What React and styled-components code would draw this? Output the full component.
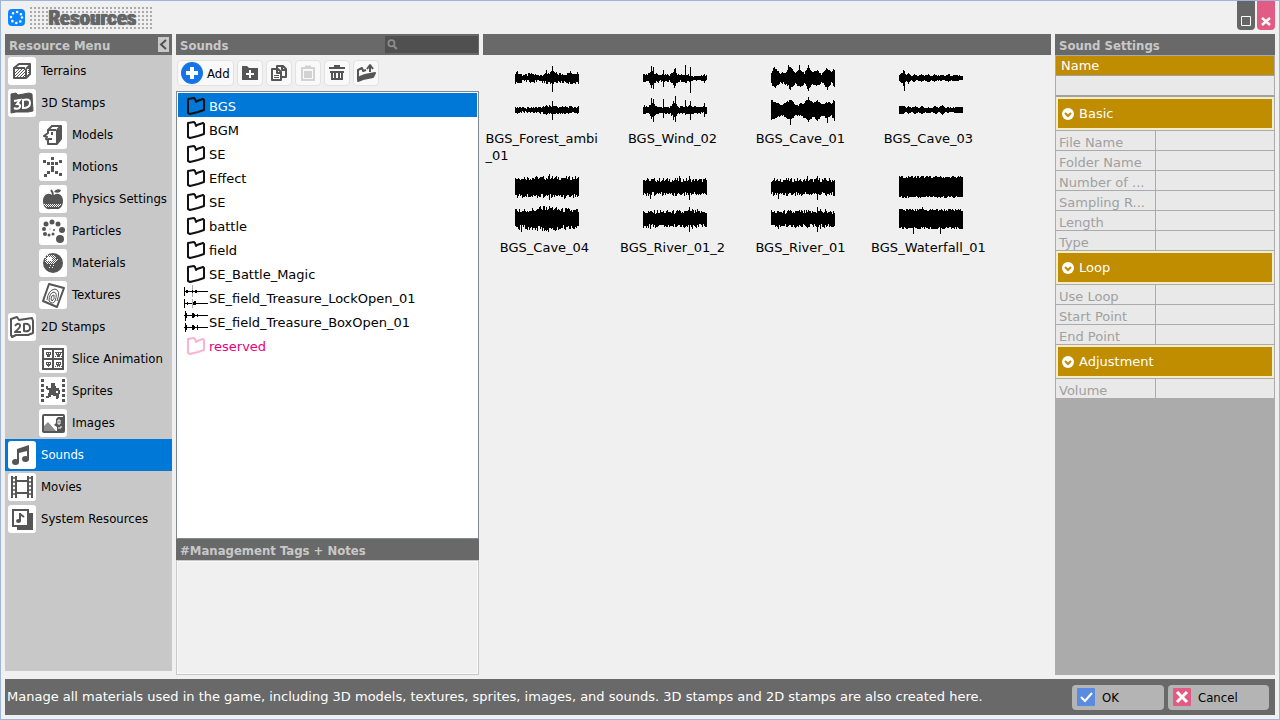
import React, { useState } from 'react';
import styled, { createGlobalStyle, css } from 'styled-components';

const wide = '"DejaVu Sans", Verdana, sans-serif';
const narrow = '"DejaVu Sans Condensed", Tahoma, sans-serif';
const ink = '#555555';

const GlobalStyle = createGlobalStyle`
  * {
    box-sizing: border-box;
  }
  body {
    margin: 0;
    background: #f0f0f0;
  }
  button, input, textarea {
    margin: 0;
    padding: 0;
    border: 0;
    border-radius: 0;
    font: inherit;
    color: inherit;
    background: none;
  }
`;

// Icons, all on a 28px grid

const TerrainIcon = () => (
  <g fill="none" stroke={ink} strokeWidth="2" strokeLinejoin="round">
    <path d="M6 11 L11 7 H22 V17 L18 21 H6 Z M6 11 H17 M18 12 L22 8 M18 12 V21" />
    <path d="M7 16 L11 12 M7 19 L14 12 M9 20 L17 12 M12 20 L17 15 M15 20 L17 18" strokeWidth="1" />
    <path d="M20.5 11 V18" strokeWidth="1" strokeDasharray="1 1" />
  </g>
);

const Stamp3DIcon = () => (
  <g>
    <path d="M3 5 L8 4 L10 6 L21 4 L24 5 L25 22 L20 23 L8 23 L3 24 Z" fill={ink} stroke={ink} strokeLinejoin="round" />
    <path d="M6 12 L12 11 L9 15 Q13 15 12 18 Q10 21 6 19" fill="none" stroke="#fff" strokeWidth="2" />
    <path d="M15 11 V19 Q22 19 22 14 Q22 9 15 11 Z" fill="none" stroke="#fff" strokeWidth="2" />
  </g>
);

const ModelIcon = () => (
  <g fill="none" stroke={ink} strokeWidth="2" strokeLinejoin="round">
    <path d="M9 9 L13 5 H22 V18 L18 23 H9 V19 L7 18 L8 16 L5 15 L9 12 Z" />
    <path d="M9 9 H17 M18 9 L22 5 M18 9 V23 M9 18 H13 M13 11 V14" />
    <path d="M20 8 V20" />
  </g>
);

const motionDots = [[12, 4], [4, 7], [20, 7], [8, 9], [12, 9], [16, 9], [12, 13], [12, 16], [8, 18], [16, 18], [5, 21], [20, 20]];

const MotionIcon = () => (
  <g fill={ink} shapeRendering="crispEdges">
    {motionDots.map(([x, y]) => (
      <rect key={`${x}-${y}`} x={x} y={y} width="3" height="3" />
    ))}
  </g>
);

const AppleIcon = () => (
  <g fill={ink}>
    <path d="M13 10 C9 7 4 10 4 16 C4 22 8 25 11 24 H17 C21 25 24 21 24 16 C24 10 19 7 15 10 Z" />
    <path d="M15 7 Q17 3 22 5 Q21 9 15 7 Z" />
    <path d="M14 11 Q14 7 12 5" fill="none" stroke={ink} strokeWidth="2" />
    <path d="M5 19.5 H23 M7 21.5 H21" stroke="#fff" strokeDasharray="1 1" />
    <path d="M6 20.5 H22" stroke="#fff" strokeDasharray="1 1" />
  </g>
);

const ParticleIcon = () => (
  <g fill={ink}>
    <circle cx="21" cy="22" r="4" />
    <circle cx="23" cy="13" r="3" />
    <circle cx="19" cy="7" r="2.5" />
    <circle cx="13" cy="5" r="2.5" />
    <circle cx="7" cy="7" r="2.5" />
    <circle cx="5" cy="12" r="2" />
    <circle cx="6" cy="17" r="2" />
    <circle cx="10" cy="18" r="1.5" />
    <circle cx="14" cy="17" r="1.5" />
    <circle cx="15" cy="13" r="1" />
    <circle cx="11" cy="12" r="0.5" />
  </g>
);

const MaterialIcon = () => (
  <g>
    <circle cx="14" cy="14" r="10" fill={ink} />
    <path d="M9 8 H13 V12 H8 V9 Z" fill="#fff" />
    <g fill="none" stroke="#fff" strokeDasharray="1 1">
      <path d="M8 6.5 H16 M6 8.5 H18 M6 10.5 H18 M6 12.5 H18 M8 14.5 H16" />
      <path d="M9 7.5 H17 M7 9.5 H17 M7 11.5 H19 M7 13.5 H17" />
      <path d="M11 16.5 H17 M18 10.5 H21 M10 18.5 H16" strokeDasharray="1 2" />
    </g>
  </g>
);

const TextureIcon = () => (
  <g fill="none" stroke={ink}>
    <path d="M10 3 L25 7 L18 26 L4 20 Z" strokeWidth="2" strokeLinejoin="round" />
    <path d="M8 19 Q9 9 16 8 Q22 9 18 20 M10 20 Q10 12 15 11 Q19 12 16 20 Q14 24 10 20 M12 18 Q12 14 15 14 Q16 18 13 20 Z" />
  </g>
);

const Stamp2DIcon = () => (
  <g fill="none" stroke={ink} strokeWidth="2" strokeLinejoin="round">
    <path d="M3 6 L9 4 L11 7 L24 5 L25 8 V20 L20 22 L8 22 L4 24 L3 22 Z" />
    <path d="M7 13 Q10 9 12 12 Q13 14 7 19 H13" />
    <path d="M16 11 V18 Q22 19 22 15 Q22 10 16 11 Z" />
  </g>
);

const SliceIcon = () => (
  <g shapeRendering="crispEdges">
    <path d="M4 4 H24 V24 H4 Z M14 4 V24 M4 14 H24" fill="none" stroke={ink} strokeWidth="2" />
    <path d="M7 7h5v3h-1v2H8v-2H7zM17 7h5v3h-1v2h-3v-2h-1zM7 17h5v3h-1v1h-1v1H9v-1H8v-1H7zM17 17h5v3h-1v2h-3v-2h-1z" fill={ink} />
    <path d="M16 7h1v1h-1zM22 7h1v1h-1zM16 11h1v1h-1zM22 11h1v1h-1zM16 21h1v1h-1zM22 21h1v1h-1z" fill={ink} />
    <path d="M8 8h1v1H8zM10 8h1v1h-1zM18 8h1v1h-1zM20 8h1v1h-1zM8 18h1v1H8zM10 18h1v1h-1zM18 18h1v1h-1zM20 18h1v1h-1zM19 21h1v1h-1z" fill="#fff" />
  </g>
);

const SpriteIcon = () => (
  <g fill={ink} shapeRendering="crispEdges">
    {[2, 7, 12, 17, 22].map((y) => (
      <React.Fragment key={y}>
        <rect x="2" y={y} width="3" height="3" />
        <rect x="23" y={y} width="3" height="3" />
      </React.Fragment>
    ))}
    <path d="M12 6h4v3h1v2h3v2h1v4h-2v-3h-2v2h3v5h-1v1h-2v-3h-3v-1h-2v2h-2v1H7v-2h2v-3h1v-3H8v-1H7V9h2v2h3z" />
  </g>
);

const ImageIcon = () => (
  <g>
    <rect x="4" y="6" width="21" height="17" rx="1" fill="none" stroke={ink} strokeWidth="2" />
    <path d="M5 17 L9 13 L17 22 H5 Z" fill="#8c8c8c" />
    <path d="M24 8 H19 L17 10 V14 L15 16 L18 18 V22 H24 Z" fill={ink} />
    <path d="M19 11 H21 V15 H19 Z M22 17 V19 H19" fill="none" stroke="#fff" />
  </g>
);

const NoteIcon = () => (
  <g fill={ink}>
    <ellipse cx="7.5" cy="21" rx="3.5" ry="3" />
    <ellipse cx="17.5" cy="18" rx="3.5" ry="3" />
    <path d="M9 8 L21 4 V19 H19 V10 L11 12 V22 H9 Z" />
  </g>
);

const MovieIcon = () => (
  <g fill="none" stroke={ink}>
    <path d="M4 3 V25 M8 3 V25 M20 3 V25 M24 3 V25" strokeWidth="2" />
    <path d="M8 8 H20 M8 20 H20" strokeWidth="2" />
    <path d="M4 5 H8 M4 9 H8 M4 13 H8 M4 17 H8 M4 21 H8 M20 5 H24 M20 9 H24 M20 13 H24 M20 17 H24 M20 21 H24" strokeWidth="1.5" />
  </g>
);

const SystemIcon = () => (
  <g>
    <path d="M20 8 H25 V25 H9 V21 H20 Z" fill={ink} />
    <rect x="5" y="5" width="15" height="16" fill="#fff" stroke={ink} strokeWidth="2" />
    <path d="M12 8 V16 M12 9 L16 12" fill="none" stroke={ink} strokeWidth="2" />
    <ellipse cx="10.5" cy="16" rx="2.5" ry="2" fill={ink} />
  </g>
);

const menu = [
  { name: 'Terrains', icon: TerrainIcon },
  { name: '3D Stamps', icon: Stamp3DIcon },
  { name: 'Models', icon: ModelIcon, nested: true },
  { name: 'Motions', icon: MotionIcon, nested: true },
  { name: 'Physics Settings', icon: AppleIcon, nested: true },
  { name: 'Particles', icon: ParticleIcon, nested: true },
  { name: 'Materials', icon: MaterialIcon, nested: true },
  { name: 'Textures', icon: TextureIcon, nested: true },
  { name: '2D Stamps', icon: Stamp2DIcon },
  { name: 'Slice Animation', icon: SliceIcon, nested: true },
  { name: 'Sprites', icon: SpriteIcon, nested: true },
  { name: 'Images', icon: ImageIcon, nested: true },
  { name: 'Sounds', icon: NoteIcon },
  { name: 'Movies', icon: MovieIcon },
  { name: 'System Resources', icon: SystemIcon },
];

const files = [
  { name: 'BGS' },
  { name: 'BGM' },
  { name: 'SE' },
  { name: 'Effect' },
  { name: 'SE' },
  { name: 'battle' },
  { name: 'field' },
  { name: 'SE_Battle_Magic' },
  { name: 'SE_field_Treasure_LockOpen_01', sound: 'lock' },
  { name: 'SE_field_Treasure_BoxOpen_01', sound: 'box' },
  { name: 'reserved', reserved: true },
];

// Each channel: env = [x, amplitude] points, jitter, peaks = [x, up, down]
const clips = [
  {
    name: 'BGS_Forest_ambi_01',
    channels: [
      { env: [[0, 5], [4, 4], [10, 3], [16, 4], [22, 3], [30, 4], [36, 6], [42, 4], [50, 4], [55, 5], [63, 5]], jitter: 3, peaks: [[31, 8, 6], [37, 12, 14], [38, 7, 6], [55, 7, 6], [2, 7, 5]] },
      { env: [[0, 3], [10, 2], [30, 3], [37, 4], [45, 3], [54, 3], [63, 3]], jitter: 2, peaks: [[31, 5, 5], [37, 9, 10], [34, 5, 4]] },
    ],
  },
  {
    name: 'BGS_Wind_02',
    channels: [
      { env: [[0, 4], [4, 3], [8, 8], [12, 4], [20, 3], [26, 3], [31, 7], [35, 3], [43, 4], [50, 2], [63, 3]], jitter: 2, peaks: [[8, 12, 10], [10, 11, 11], [20, 8, 9], [31, 9, 10], [32, 10, 8], [42, 13, 5], [47, 11, 15], [61, 4, 5]] },
      { env: [[0, 4], [5, 3], [9, 8], [13, 3], [26, 3], [31, 7], [35, 3], [42, 4], [63, 3]], jitter: 2, peaks: [[8, 12, 9], [10, 11, 12], [20, 11, 8], [30, 9, 10], [32, 14, 12], [42, 10, 5], [47, 9, 10], [61, 7, 7]] },
    ],
  },
  {
    name: 'BGS_Cave_01',
    channels: [
      { env: [[0, 6], [3, 10], [8, 5], [13, 5], [19, 11], [24, 5], [28, 10], [33, 5], [37, 12], [41, 6], [46, 8], [50, 4], [56, 10], [60, 5], [63, 9]], jitter: 2, peaks: [[17, 13, 7], [28, 13, 8], [37, 13, 13], [56, 9, 12]] },
      { env: [[0, 10], [5, 7], [11, 5], [19, 10], [25, 5], [31, 6], [37, 11], [42, 7], [46, 10], [51, 5], [56, 9], [60, 6], [63, 10]], jitter: 2, peaks: [[19, 10, 15], [37, 13, 12], [56, 7, 13]] },
    ],
  },
  {
    name: 'BGS_Cave_03',
    channels: [
      { env: [[0, 3], [4, 6], [7, 3], [9, 5], [12, 2], [15, 4], [18, 2], [22, 4], [25, 2], [29, 4], [32, 2], [35, 4], [38, 2], [42, 3], [45, 2], [49, 4], [52, 2], [56, 3], [63, 2]], jitter: 1, peaks: [[4, 8, 8], [5, 7, 13], [9, 5, 6]] },
      { env: [[0, 4], [4, 4], [7, 2], [9, 4], [12, 2], [16, 4], [19, 2], [22, 4], [26, 2], [29, 3], [32, 2], [36, 4], [39, 2], [43, 5], [46, 2], [49, 3], [52, 2], [56, 3], [63, 3]], jitter: 1, peaks: [] },
    ],
  },
  {
    name: 'BGS_Cave_04',
    channels: [
      { env: [[0, 9], [30, 9], [63, 9]], jitter: 4, peaks: [[20, 10, 9], [34, 13, 13], [49, 9, 12], [7, 8, 11]] },
      { env: [[0, 9], [9, 8], [27, 10], [36, 11], [45, 9], [63, 8]], jitter: 5, peaks: [[4, 10, 11], [25, 13, 10], [29, 13, 12], [6, 7, 13], [33, 10, 13]] },
    ],
  },
  {
    name: 'BGS_River_01_2',
    channels: [
      { env: [[0, 7], [63, 7]], jitter: 4, peaks: [[7, 6, 12], [36, 11, 7], [46, 11, 13], [30, 6, 9]] },
      { env: [[0, 7], [46, 7], [63, 7]], jitter: 4, peaks: [[7, 8, 10], [30, 9, 8], [46, 12, 13], [49, 10, 10], [54, 10, 6]] },
    ],
  },
  {
    name: 'BGS_River_01',
    channels: [
      { env: [[0, 7], [63, 7]], jitter: 4, peaks: [[7, 6, 12], [36, 11, 7], [46, 11, 13], [30, 6, 9]] },
      { env: [[0, 7], [46, 7], [63, 7]], jitter: 4, peaks: [[7, 8, 10], [30, 9, 8], [46, 12, 13], [49, 10, 10], [54, 10, 6]] },
    ],
  },
  {
    name: 'BGS_Waterfall_01',
    channels: [
      { env: [[0, 10], [63, 10]], jitter: 2, peaks: [[6, 9, 11], [30, 11, 9]] },
      { env: [[0, 9], [63, 9]], jitter: 3, peaks: [[14, 9, 15], [23, 12, 9], [33, 10, 10], [41, 9, 15]] },
    ],
  },
];

const sections = [
  { title: 'Basic', fields: ['File Name', 'Folder Name', 'Number of ...', 'Sampling R...', 'Length', 'Type'] },
  { title: 'Loop', fields: ['Use Loop', 'Start Point', 'End Point'] },
  { title: 'Adjustment', fields: ['Volume'] },
];

const noise = (n) => {
  const v = Math.sin(n * 12.9898) * 43758.5453;
  return v - Math.floor(v);
};

const amplitude = (env, x) => {
  for (let i = 1; i < env.length; i++) {
    const [x0, a0] = env[i - 1];
    const [x1, a1] = env[i];
    if (x <= x1) return a0 + ((a1 - a0) * (x - x0)) / (x1 - x0);
  }
  return env[env.length - 1][1];
};

const channelPath = ({ env, jitter, peaks }, mid, seed) => {
  let d = '';
  for (let x = 0; x < 64; x++) {
    const peak = peaks.find((p) => p[0] === x);
    const base = amplitude(env, x);
    const up = peak ? peak[1] : Math.round(base + jitter * (noise(x + seed) - 0.5));
    const down = peak ? peak[2] : Math.round(base + jitter * (noise(x + seed + 90) - 0.5));
    d += `M${x} ${mid - up}h1v${up + down}h-1z`;
  }
  return d;
};

const Waveform = ({ channels, seed }) => (
  <svg width="64" height="64" viewBox="0 0 64 64" shapeRendering="crispEdges" aria-hidden="true">
    <path d={channelPath(channels[0], 16, seed)} />
    <path d={channelPath(channels[1], 48, seed + 200)} />
  </svg>
);

const FolderIcon = ({ color }) => (
  <svg width="24" height="24" viewBox="0 0 24 24" fill="none" stroke={color} strokeWidth="2" strokeLinejoin="round" aria-hidden="true">
    <path d="M4 6 L10 5 L11 6 L12 9 L13 8 L19 6 L20 7 V17 L14 19 L6 21 L4 20 Z" />
  </svg>
);

const ClipIcon = ({ kind }) => (
  <svg width="24" height="24" viewBox="0 0 24 24" shapeRendering="crispEdges" aria-hidden="true">
    <path d="M0 6h24v1H0zM0 18h24v1H0z" />
    {kind === 'lock' ? (
      <>
        <path d="M8 0h1v12H8zM8 14h1v9H8z" fill="#aaa" />
        <path d="M0 2h1v9H0zM0 14h1v9H0zM2 5h2v3H2zM3 17h1v3H3zM8 5h1v3H8zM11 5h2v3h-2zM10 16h2v4h-2zM9 17h1v3H9z" />
      </>
    ) : (
      <path d="M1 2h1v10H1zM2 4h1v5H2zM1 14h1v9H1zM2 16h1v5H2zM8 4h2v5H8zM10 5h1v3h-1zM13 5h1v3h-1zM8 16h2v5H8zM10 17h1v3h-1zM13 16h1v5h-1z" />
    )}
  </svg>
);

// Layout

const Window = styled.div`
  display: flex;
  flex-direction: column;
  min-height: 100vh;
  padding: 0 4px 4px;
  border: 1px solid #9db6d6;
  font-family: ${wide};
  font-size: 13px;
  line-height: 17px;
  color: #000;
  background: #f0f0f0;
`;

const TitleBar = styled.header`
  display: flex;
  align-items: flex-start;
  height: 33px;
`;

const Logo = styled.svg`
  margin: 8px 5px 0 3px;
`;

const TitlePlate = styled.div`
  width: 124px;
  height: 24px;
  margin-top: 5px;
  text-align: center;
  background: radial-gradient(circle at 1px 1px, #aaa 1px, transparent 1px) 0 1px / 4px 4px;
`;

const Title = styled.h1`
  margin: 0;
  font-family: Impact, "Liberation Sans Narrow", "Roboto Condensed", "DejaVu Sans Condensed", sans-serif;
  font-size: 21px;
  font-weight: bold;
  line-height: 24px;
  color: #666;
  text-shadow: 0 0 1px #666, 1px 0 0 #666;
`;

const WindowControls = styled.div`
  display: flex;
  gap: 2px;
  margin-left: auto;
`;

const WindowButton = styled.button`
  display: flex;
  align-items: flex-end;
  justify-content: center;
  width: 18px;
  height: 29px;
  padding-bottom: 4px;
  border-radius: 0 0 4px 4px;
  background: ${(p) => (p.$danger ? '#e05c84' : '#666')};
`;

const Panels = styled.main`
  display: grid;
  flex: 1;
  grid-template-columns: 167px 303px 1fr 220px;
  gap: 4px;
`;

const Panel = styled.section`
  display: flex;
  flex-direction: column;
  min-width: 0;
`;

const PanelHeader = styled.div`
  display: flex;
  align-items: center;
  justify-content: space-between;
  flex: none;
  height: 21px;
  padding-left: 4px;
  background: #696969;
`;

const headingText = css`
  margin: 0;
  padding-top: 2px;
  font-family: ${narrow};
  font-size: 13px;
  font-weight: bold;
  color: #c8c8c8;
`;

const PanelTitle = styled.h2`
  ${headingText}
`;

const CollapseButton = styled.button`
  display: flex;
  align-items: center;
  justify-content: center;
  width: 11px;
  height: 15px;
  margin-right: 3px;
  background: #c8c8c8;
`;

const Menu = styled.nav`
  display: flex;
  flex: 1;
  flex-direction: column;
  margin-bottom: 4px;
  background: #c8c8c8;
`;

const MenuItem = styled.button`
  display: flex;
  align-items: center;
  gap: 5px;
  height: 32px;
  padding-left: ${(p) => (p.$nested ? 34 : 3)}px;
  font-family: ${narrow};
  white-space: nowrap;
  color: ${(p) => (p.$active ? '#fff' : '#000')};
  background: ${(p) => (p.$active ? '#0078d7' : 'transparent')};
`;

const MenuText = styled.span`
  padding-bottom: 2px;
`;

const IconTile = styled.svg`
  flex: none;
  border-radius: 3px;
  background: #fff;
`;

const Search = styled.label`
  display: flex;
  align-items: center;
  width: 93px;
  height: 17px;
  margin-right: 1px;
  padding-left: 2px;
  background: #505050;
`;

const SearchInput = styled.input`
  width: 100%;
  min-width: 0;
  color: #ddd;
`;

const Toolbar = styled.div`
  display: flex;
  align-items: center;
  gap: 3px;
  height: 36px;
  padding-left: 1px;
`;

const ToolButton = styled.button`
  display: flex;
  align-items: center;
  justify-content: center;
  gap: 4px;
  min-width: 26px;
  height: 26px;
  padding: 0 ${(p) => (p.$labelled ? 3 : 0)}px;
  border: 1px solid #e2e2e2;
  border-radius: 4px;
  font-family: ${narrow};
  background: #f9f9f9;
`;

const FileList = styled.div`
  display: flex;
  flex: 1;
  flex-direction: column;
  padding: 1px;
  border: 1px solid #828790;
  background: #fff;
`;

const FileRow = styled.button`
  display: flex;
  align-items: center;
  gap: 1px;
  height: 24px;
  padding-left: 6px;
  white-space: nowrap;
  color: ${(p) => (p.$active ? '#fff' : p.$reserved ? '#e6007e' : '#000')};
  background: ${(p) => (p.$active ? '#0078d7' : 'transparent')};
`;

const FileName = styled.span`
  padding-top: 2px;
`;

const NotesLabel = styled.label`
  ${headingText}
`;

const Notes = styled.textarea`
  height: 115px;
  border: 1px solid #c8c8c8;
  outline: 1px solid #fafafa;
  outline-offset: -2px;
  resize: none;
`;

const ClipGrid = styled.div`
  display: grid;
  grid-template-columns: repeat(auto-fill, 128px);
  gap: 7px 0;
  padding-top: 7px;
  padding-right: 40px;
`;

const Clip = styled.button`
  display: flex;
  flex-direction: column;
  align-items: center;
  gap: 4px;
`;

const ClipName = styled.span`
  max-width: 123px;
  padding-right: 5px;
  text-align: left;
  overflow-wrap: anywhere;
`;

const Properties = styled.div`
  flex: 1;
  padding: 1px 1px 0;
  background: #ababab;
`;

const NameLabel = styled.label`
  display: block;
  height: 20px;
  padding-left: 5px;
  border-bottom: 1px solid #a0a0a0;
  line-height: 19px;
  color: #fff;
  background: #c08c00;
`;

const NameInput = styled.input`
  display: block;
  width: 100%;
  height: 21px;
  border-bottom: 2px solid #a0a0a0;
  background: #e9e9e9;
`;

const SectionButton = styled.button`
  display: flex;
  align-items: center;
  gap: 5px;
  width: 100%;
  height: 33px;
  margin-bottom: 1px;
  padding-left: 4px;
  border: 2px solid #f5ecc8;
  color: #fff;
  background: #c08c00;
`;

const Field = styled.div`
  display: grid;
  grid-template-columns: 99px 1fr;
  gap: 1px;
  height: 19px;
  margin-bottom: 1px;
`;

const FieldLabel = styled.label`
  padding: 4px 0 0 3px;
  line-height: 16px;
  overflow: hidden;
  white-space: nowrap;
  color: #a0a0a0;
  background: #e9e9e9;
`;

const FieldInput = styled.input`
  min-width: 0;
  background: #e9e9e9;
`;

const Footer = styled.footer`
  display: flex;
  align-items: center;
  gap: 4px;
  min-height: 36px;
  margin-top: 4px;
  padding: 0 6px 0 2px;
  background: #696969;
`;

const Hint = styled.p`
  flex: 1;
  margin: 0;
  padding-bottom: 2px;
  color: #fff;
`;

const DialogButton = styled.button`
  display: flex;
  align-items: center;
  gap: 7px;
  width: ${(p) => p.$width}px;
  height: 25px;
  padding-left: 5px;
  border-radius: 4px;
  font-family: ${narrow};
  background: #b4b4b4;
`;

const App = () => {
  const [page, setPage] = useState('Sounds');
  const [file, setFile] = useState(0);

  return (
    <>
      <GlobalStyle />
      <Window>
        <TitleBar>
          <Logo width="17" height="17" viewBox="0 0 17 17" aria-hidden="true">
            <rect width="17" height="17" rx="4" fill="#0a84ff" />
            <circle cx="8.5" cy="8.5" r="5.5" fill="none" stroke="#fff" strokeWidth="2.6" strokeLinecap="round" strokeDasharray="0 4.32" />
          </Logo>
          <TitlePlate>
            <Title>Resources</Title>
          </TitlePlate>
          <WindowControls>
            <WindowButton aria-label="Maximize">
              <svg width="10" height="10" viewBox="0 0 10 10" fill="none" stroke="#fff">
                <path d="M.5 .5 H9.5 V9.5 H.5 Z" />
              </svg>
            </WindowButton>
            <WindowButton $danger aria-label="Close">
              <svg width="10" height="9" viewBox="0 0 10 9" stroke="#fff" strokeWidth="2.5">
                <path d="M1 1 L9 8 M9 1 L1 8" />
              </svg>
            </WindowButton>
          </WindowControls>
        </TitleBar>

        <Panels>
          <Panel>
            <PanelHeader>
              <PanelTitle>Resource Menu</PanelTitle>
              <CollapseButton aria-label="Collapse menu">
                <svg width="9" height="13" viewBox="0 0 9 13" fill="none" stroke="#505050" strokeWidth="2">
                  <path d="M7 2 L2 6.5 L7 11" />
                </svg>
              </CollapseButton>
            </PanelHeader>
            <Menu>
              {menu.map(({ name, icon: Icon, nested }) => (
                <MenuItem key={name} $nested={nested} $active={name === page} onClick={() => setPage(name)}>
                  <IconTile width="28" height="28" viewBox="0 0 28 28" aria-hidden="true">
                    <Icon />
                  </IconTile>
                  <MenuText>{name}</MenuText>
                </MenuItem>
              ))}
            </Menu>
          </Panel>

          <Panel>
            <PanelHeader>
              <PanelTitle>Sounds</PanelTitle>
              <Search>
                <svg width="12" height="13" viewBox="0 0 12 13" fill="none" stroke="#8c8c8c" strokeWidth="2" aria-hidden="true">
                  <circle cx="5" cy="5" r="3.5" />
                  <path d="M7.5 8 L11 11.5" strokeWidth="2.5" />
                </svg>
                <SearchInput aria-label="Search sounds" />
              </Search>
            </PanelHeader>
            <Toolbar>
              <ToolButton $labelled>
                <svg width="22" height="22" viewBox="0 0 22 22" aria-hidden="true">
                  <circle cx="11" cy="11" r="11" fill="#1473e6" />
                  <path d="M11 5 V17 M5 11 H17" stroke="#fff" strokeWidth="4" />
                </svg>
                Add
              </ToolButton>
              <ToolButton aria-label="New folder">
                <svg width="20" height="20" viewBox="0 0 20 20">
                  <path d="M2 3 H7 L9 5 H18 V17 H2 Z" fill={ink} />
                  <path d="M10 7 V15 M6 11 H14" stroke="#fff" strokeWidth="2" />
                </svg>
              </ToolButton>
              <ToolButton aria-label="Copy">
                <svg width="20" height="20" viewBox="0 0 20 20" fill="#fff" stroke={ink} strokeWidth="2" strokeLinejoin="round">
                  <path d="M8 3 H14 L17 6 V14 H8 Z M13 3 V7 H17" />
                  <path d="M3 6 H9 L12 9 V17 H3 Z M8 6 V10 H12" />
                  <path d="M5 12.5 H10 M5 14.5 H10" strokeWidth="1" />
                </svg>
              </ToolButton>
              <ToolButton aria-label="Paste" disabled>
                <svg width="20" height="20" viewBox="0 0 20 20" fill="none" stroke="#d2d2d2" strokeWidth="2">
                  <path d="M4 5 H16 V17 H4 Z" />
                  <path d="M7 4 H13" strokeWidth="3" />
                  <path d="M6 8 H14 V15 H6 Z" fill="#d2d2d2" stroke="none" />
                </svg>
              </ToolButton>
              <ToolButton aria-label="Delete">
                <svg width="20" height="20" viewBox="0 0 20 20" fill="none" stroke={ink} strokeWidth="2">
                  <path d="M2 5 H18 M7 3 H13 M3 9 H17" />
                  <path d="M5 9 V16 H15 V9 M8 9 V16 M12 9 V16" />
                </svg>
              </ToolButton>
              <ToolButton aria-label="Export">
                <svg width="22" height="20" viewBox="0 0 22 20" fill="none" stroke={ink} strokeWidth="2" strokeLinejoin="round">
                  <path d="M3 17 V7 L7 5 L8 8 L11 7 M15 9 V4 M12 6 L15 2 L18 6" />
                  <path d="M3 18 L5 14 L10 12 L20 10 L18 14 L8 16 Z" fill={ink} />
                </svg>
              </ToolButton>
            </Toolbar>
            <FileList>
              {files.map(({ name, sound, reserved }, index) => (
                <FileRow key={index} $active={index === file} $reserved={reserved} onClick={() => setFile(index)}>
                  {sound ? <ClipIcon kind={sound} /> : <FolderIcon color={reserved ? '#f9b4d2' : '#111'} />}
                  <FileName>{name}</FileName>
                </FileRow>
              ))}
            </FileList>
            <PanelHeader>
              <NotesLabel htmlFor="notes">#Management Tags + Notes</NotesLabel>
            </PanelHeader>
            <Notes id="notes" />
          </Panel>

          <Panel>
            <PanelHeader />
            <ClipGrid>
              {clips.map(({ name, channels }, index) => (
                <Clip key={name}>
                  <Waveform channels={channels} seed={index * 17} />
                  <ClipName>{name}</ClipName>
                </Clip>
              ))}
            </ClipGrid>
          </Panel>

          <Panel>
            <PanelHeader>
              <PanelTitle>Sound Settings</PanelTitle>
            </PanelHeader>
            <Properties>
              <NameLabel htmlFor="sound-name">Name</NameLabel>
              <NameInput id="sound-name" />
              {sections.map(({ title, fields }) => (
                <React.Fragment key={title}>
                  <SectionButton>
                    <svg width="12" height="12" viewBox="0 0 12 12" aria-hidden="true">
                      <circle cx="6" cy="6" r="6" fill="#fff" />
                      <path d="M3 5 L6 8 L9 5" fill="none" stroke="#c08c00" strokeWidth="2" />
                    </svg>
                    {title}
                  </SectionButton>
                  {fields.map((field) => (
                    <Field key={field}>
                      <FieldLabel htmlFor={field}>{field}</FieldLabel>
                      <FieldInput id={field} disabled />
                    </Field>
                  ))}
                </React.Fragment>
              ))}
            </Properties>
          </Panel>
        </Panels>

        <Footer>
          <Hint>
            Manage all materials used in the game, including 3D models, textures, sprites, images, and sounds. 3D
            stamps and 2D stamps are also created here.
          </Hint>
          <DialogButton $width={92}>
            <svg width="18" height="18" viewBox="0 0 18 18" aria-hidden="true">
              <rect width="18" height="18" rx="1" fill="#5b8be0" />
              <path d="M4 9 L8 13 L15 5" fill="none" stroke="#fff" strokeWidth="2" />
            </svg>
            OK
          </DialogButton>
          <DialogButton $width={101}>
            <svg width="18" height="18" viewBox="0 0 18 18" aria-hidden="true">
              <rect width="18" height="18" rx="1" fill="#e05c84" />
              <path d="M4 4 L14 14 M14 4 L4 14" stroke="#fff" strokeWidth="3" />
            </svg>
            Cancel
          </DialogButton>
        </Footer>
      </Window>
    </>
  );
};

export default App;
